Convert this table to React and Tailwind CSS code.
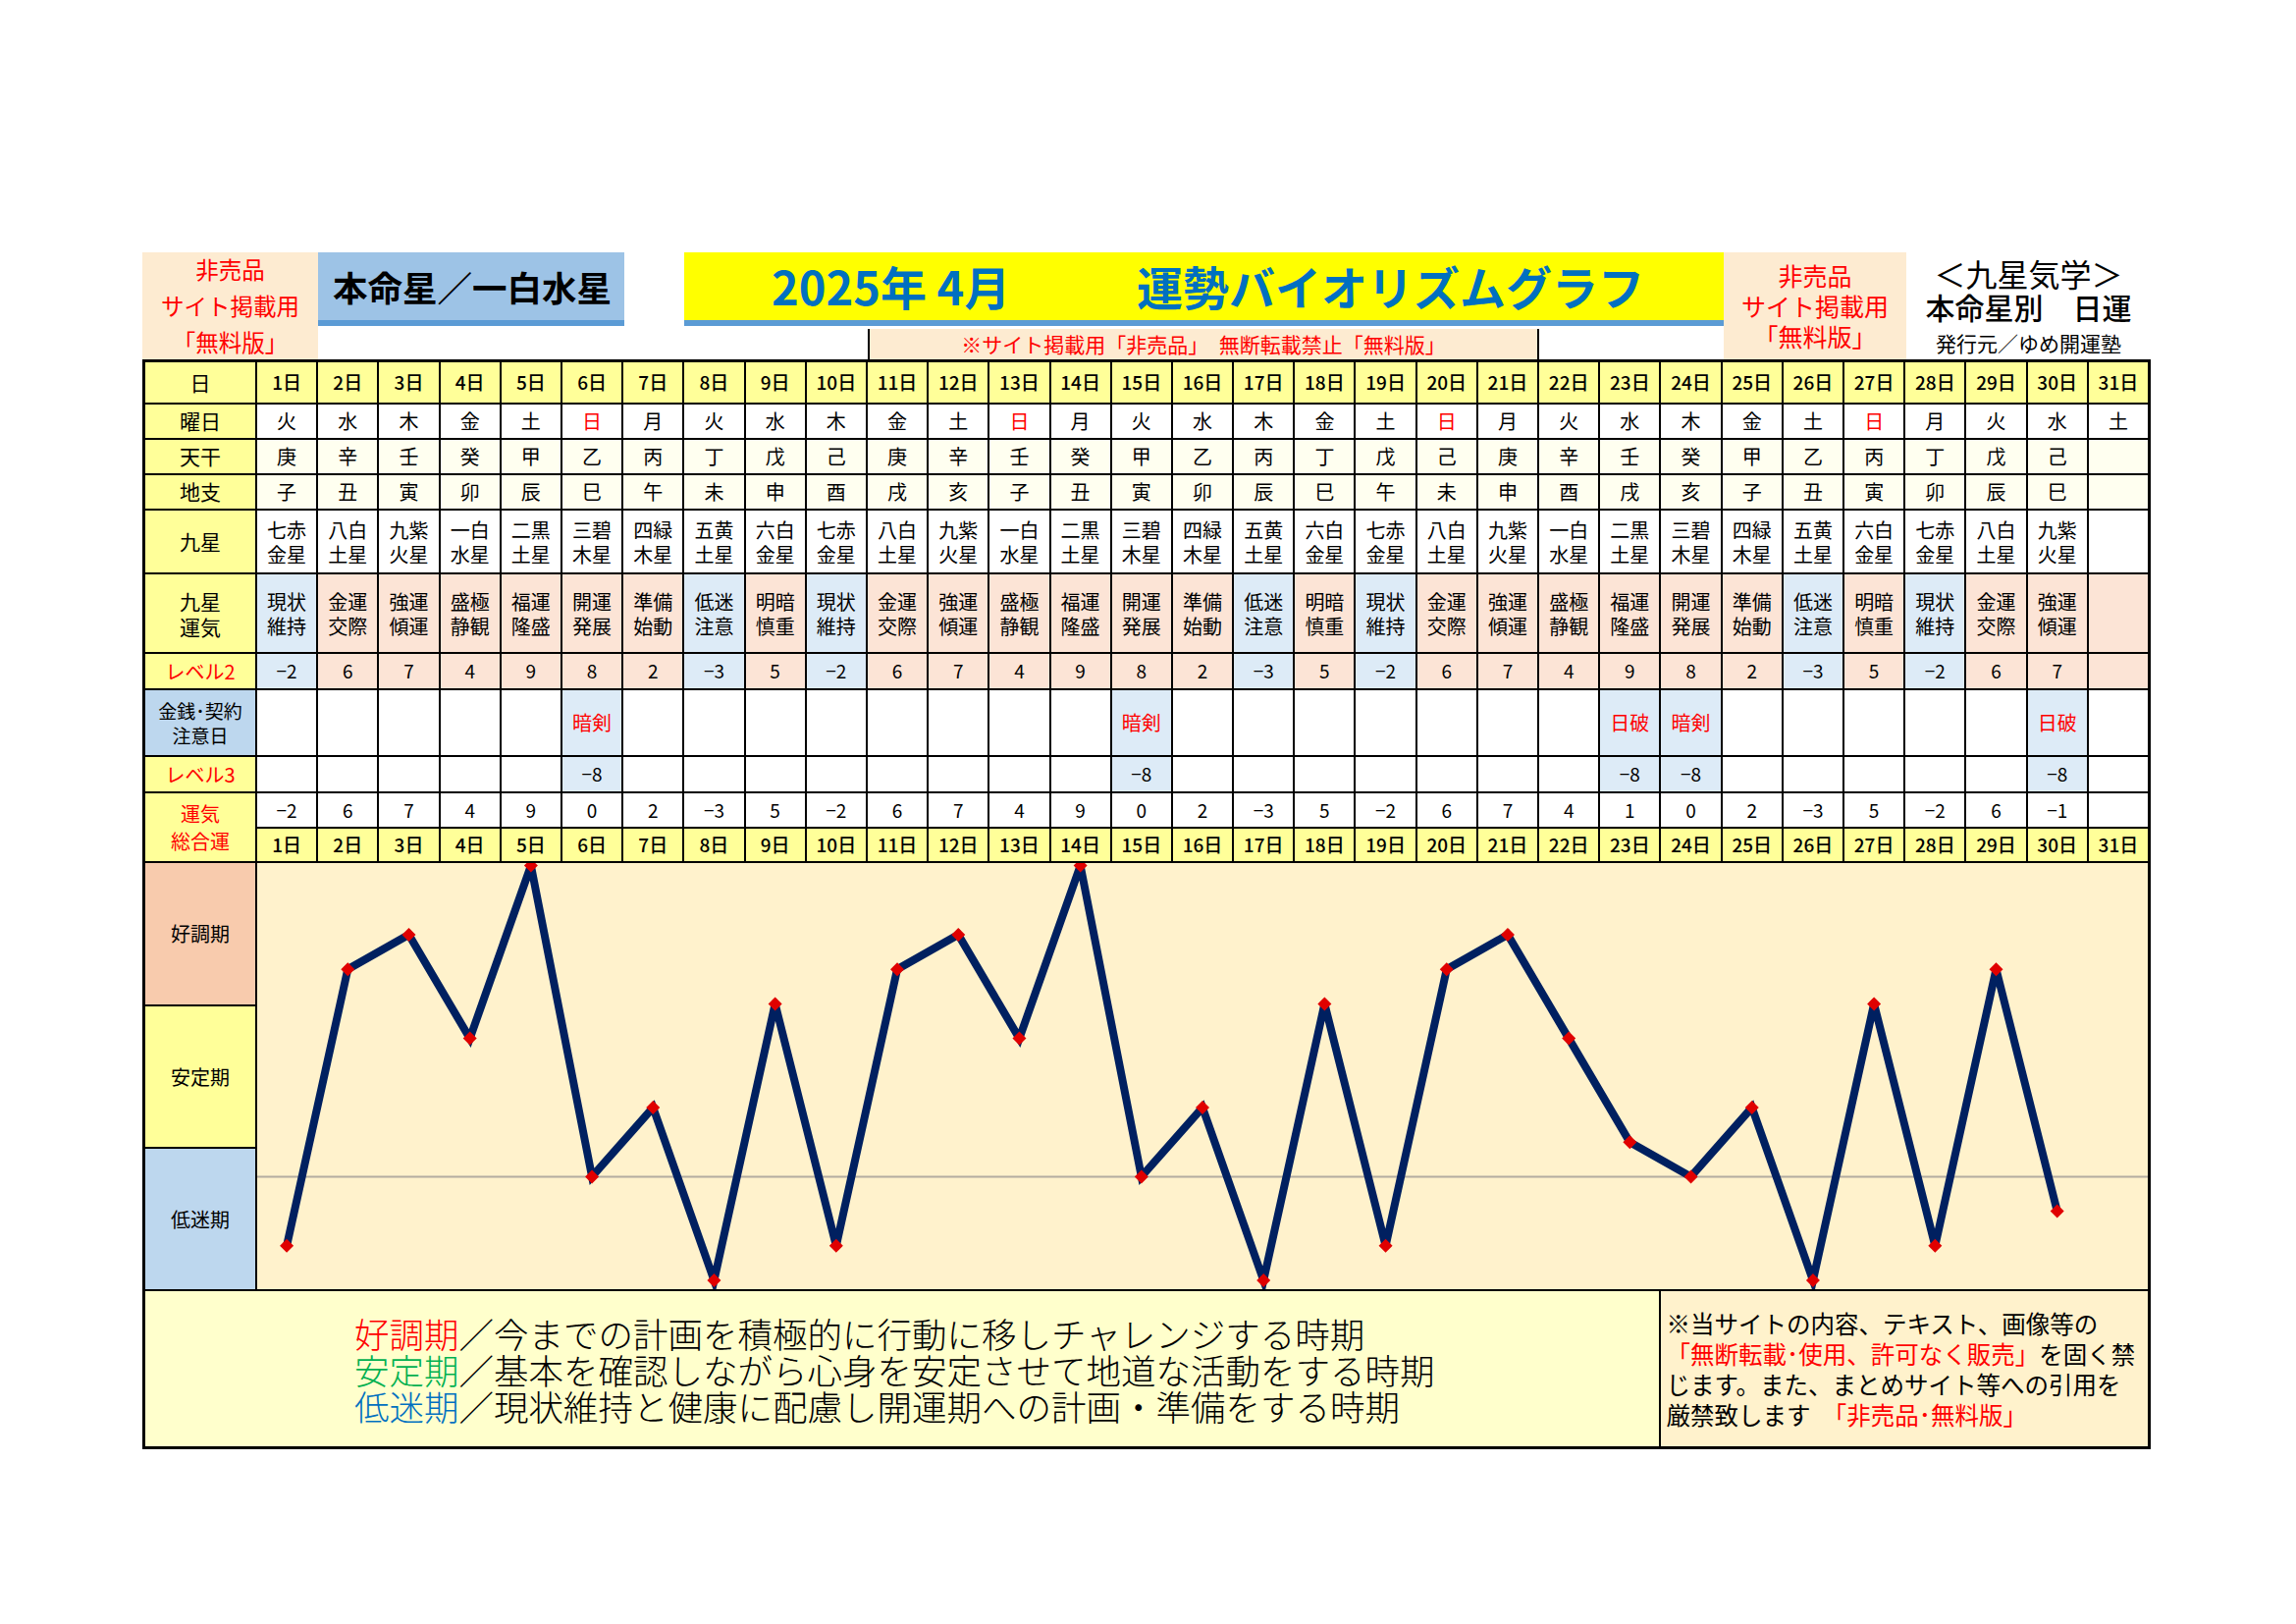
import React from "react";

const STARS = [
  { name: ["七赤", "金星"], unki: ["現状", "維持"], lv: -2 },
  { name: ["八白", "土星"], unki: ["金運", "交際"], lv: 6 },
  { name: ["九紫", "火星"], unki: ["強運", "傾運"], lv: 7 },
  { name: ["一白", "水星"], unki: ["盛極", "静観"], lv: 4 },
  { name: ["二黒", "土星"], unki: ["福運", "隆盛"], lv: 9 },
  { name: ["三碧", "木星"], unki: ["開運", "発展"], lv: 8 },
  { name: ["四緑", "木星"], unki: ["準備", "始動"], lv: 2 },
  { name: ["五黄", "土星"], unki: ["低迷", "注意"], lv: -3 },
  { name: ["六白", "金星"], unki: ["明暗", "慎重"], lv: 5 },
];

const YOUBI = ("火水木金土日月".repeat(4) + "火水土").split("");
const KAN = "庚辛壬癸甲乙丙丁戊己".repeat(3).split("");
const SHI = "子丑寅卯辰巳午未申酉戌亥".repeat(3).slice(0, 30).split("");
const CAUTION = { 6: "暗剣", 15: "暗剣", 23: "日破", 24: "暗剣", 30: "日破" };

const days = Array.from({ length: 31 }, (_, i) => {
  const d = i + 1;
  if (d === 31) return { d, youbi: YOUBI[i], empty: true };
  const star = STARS[i % 9];
  const caution = CAUTION[d];
  return {
    d,
    youbi: YOUBI[i],
    kan: KAN[i],
    shi: SHI[i],
    star,
    low: star.lv < 0,
    caution,
    total: star.lv + (caution ? -8 : 0),
  };
});

const fmt = (n) => (n < 0 ? "−" + Math.abs(n) : String(n));

const LABEL = "bg-[#FFFF99] flex flex-col items-center justify-center text-center";
const CELL = "flex flex-col items-center justify-center text-center";

// chart cell: 31 columns of 60.19px + 30 gaps of 2px, 3 bands + 2 gaps
function Chart() {
  const colW = 1866 / 31;
  const pitch = colW + 2;
  const pts = days
    .filter((x) => !x.empty)
    .map((x) => [(x.d - 1) * pitch + colW / 2, 2.6 + (9 - x.total) * 35.2]);
  const zeroY = 2.6 + 9 * 35.2;
  return (
    <svg className="absolute inset-0 w-full h-full" viewBox="0 0 1926 434" preserveAspectRatio="none">
      <line x1="0" y1={zeroY} x2="1926" y2={zeroY} stroke="#b3aca0" strokeWidth="2" />
      <polyline
        points={pts.map((p) => p.join(",")).join(" ")}
        fill="none"
        stroke="#002060"
        strokeWidth="8"
      />
      {pts.map(([x, y], i) => (
        <polygon
          key={i}
          points={`${x},${y - 7} ${x + 7},${y} ${x},${y + 7} ${x - 7},${y}`}
          fill="#e00000"
        />
      ))}
    </svg>
  );
}

export default function App() {
  return (
    <div className="w-[2339px] h-[1654px] bg-white text-black font-['Noto_Sans_CJK_JP',sans-serif]">
      <div className="ml-[145px] pt-[257px] w-[2046px]">
        {/* banner */}
        <div className="flex h-[109px]">
          <div className="w-[179px] bg-[#FDEBD1] flex flex-col items-center justify-center text-[#FF0000] text-[23.5px] leading-[37px]">
            <span>非売品</span>
            <span>サイト掲載用</span>
            <span>「無料版」</span>
          </div>
          <div className="w-[1432px] flex flex-col">
            <div className="flex h-[75px]">
              <div className="w-[312px] bg-[#9DC3E6] border-b-[6px] border-[#5B9BD5] flex items-center pl-[15px] text-[35.5px] font-bold">
                本命星／一白水星
              </div>
              <div className="w-[61px]" />
              <div className="w-[1059px] bg-[#FFFF00] border-b-[6px] border-[#5B9BD5] flex items-center text-[#0070C0] font-bold text-[47px]">
                <span className="pl-[89px] w-[461px]">2025年 4月</span>
                <span>運勢バイオリズムグラフ</span>
              </div>
            </div>
            <div className="flex h-[34px] pt-[3px]">
              <div className="w-[560px]" />
              <div className="w-[684px] bg-[#FDEBD1] border-x-2 border-black flex items-center justify-center text-[#FF0000] text-[21px]">
                ※サイト掲載用「非売品」　無断転載禁止「無料版」
              </div>
            </div>
          </div>
          <div className="w-[186px] bg-[#FDEBD1] flex flex-col items-center justify-center text-[#FF0000] text-[25px] leading-[31px]">
            <span>非売品</span>
            <span>サイト掲載用</span>
            <span>「無料版」</span>
          </div>
          <div className="w-[249px] flex flex-col items-center justify-center">
            <span className="text-[32px] leading-[34px]">＜九星気学＞</span>
            <span className="text-[30px] leading-[34px] font-medium">本命星別　日運</span>
            <span className="text-[21px] leading-[28px] mt-[6px]">発行元／ゆめ開運塾</span>
          </div>
        </div>

        {/* table */}
        <div className="grid w-[2046px] bg-black p-[3px] gap-[2px] grid-cols-[112px_repeat(31,minmax(0,1fr))] grid-rows-[41px_34px_34px_34px_63px_79px_35px_66px_35px_34px_33px_144px_143px_143px_158px] text-[20px]">
          <div className={`${LABEL} text-[21px]`}>日</div>
          {days.map((x) => (
            <div key={"h" + x.d} className={`${CELL} bg-[#FFFF99] text-[19px] font-medium`}>{x.d}日</div>
          ))}

          <div className={`${LABEL} text-[21px]`}>曜日</div>
          {days.map((x) => (
            <div key={"y" + x.d} className={`${CELL} bg-white ${x.youbi === "日" ? "text-[#FF0000]" : ""}`}>{x.youbi}</div>
          ))}

          <div className={`${LABEL} text-[21px]`}>天干</div>
          {days.map((x) => (
            <div key={"k" + x.d} className={`${CELL} bg-[#FFFFF0]`}>{x.kan}</div>
          ))}

          <div className={`${LABEL} text-[21px]`}>地支</div>
          {days.map((x) => (
            <div key={"s" + x.d} className={`${CELL} bg-[#FFFFF0]`}>{x.shi}</div>
          ))}

          <div className={`${LABEL} text-[21px]`}>九星</div>
          {days.map((x) => (
            <div key={"n" + x.d} className={`${CELL} bg-white leading-[25px]`}>
              {x.star && (
                <>
                  <span>{x.star.name[0]}</span>
                  <span>{x.star.name[1]}</span>
                </>
              )}
            </div>
          ))}

          <div className={`${LABEL} text-[21px] leading-[26px]`}>
            <span>九星</span>
            <span>運気</span>
          </div>
          {days.map((x) => (
            <div key={"u" + x.d} className={`${CELL} leading-[25px] ${x.low ? "bg-[#DDEBF7]" : "bg-[#FCE4D6]"}`}>
              {x.star && (
                <>
                  <span>{x.star.unki[0]}</span>
                  <span>{x.star.unki[1]}</span>
                </>
              )}
            </div>
          ))}

          <div className={`${LABEL} text-[#FF0000]`}>レベル2</div>
          {days.map((x) => (
            <div key={"l2" + x.d} className={`${CELL} text-[19px] ${x.low ? "bg-[#DDEBF7]" : "bg-[#FCE4D6]"}`}>
              {x.star ? fmt(x.star.lv) : ""}
            </div>
          ))}

          <div className={`${LABEL} !bg-[#BDD7EE] text-[19px] leading-[25px]`}>
            <span>金銭･契約</span>
            <span>注意日</span>
          </div>
          {days.map((x) => (
            <div key={"c" + x.d} className={`${CELL} text-[#FF0000] ${x.caution ? "bg-[#DDEBF7]" : "bg-white"}`}>
              {x.caution || ""}
            </div>
          ))}

          <div className={`${LABEL} text-[#FF0000]`}>レベル3</div>
          {days.map((x) => (
            <div key={"l3" + x.d} className={`${CELL} text-[19px] ${x.caution ? "bg-[#DDEBF7]" : "bg-white"}`}>
              {x.caution ? fmt(-8) : ""}
            </div>
          ))}

          <div className={`${LABEL} row-span-2 text-[#FF0000] leading-[28px]`}>
            <span>運気</span>
            <span>総合運</span>
          </div>
          {days.map((x) => (
            <div key={"t" + x.d} className={`${CELL} bg-white text-[19px]`}>
              {x.empty ? "" : fmt(x.total)}
            </div>
          ))}
          {days.map((x) => (
            <div key={"f" + x.d} className={`${CELL} bg-[#FFFF99] text-[19px] font-medium`}>{x.d}日</div>
          ))}

          <div className={`${CELL} bg-[#F8CBAD]`}>好調期</div>
          <div className="col-span-31 row-span-3 bg-[#FFF2CC] relative">
            <Chart />
          </div>
          <div className={`${CELL} bg-[#FFFF99]`}>安定期</div>
          <div className={`${CELL} bg-[#BDD7EE]`}>低迷期</div>

          <div className="col-span-24 bg-[#FFFFCC] flex flex-col justify-center pl-[213px] text-[35.5px] leading-[37px] font-light">
            <p>
              <span className="text-[#FF0000]">好調期</span>／今までの計画を積極的に行動に移しチャレンジする時期
            </p>
            <p>
              <span className="text-[#00B050]">安定期</span>／基本を確認しながら心身を安定させて地道な活動をする時期
            </p>
            <p>
              <span className="text-[#0070C0]">低迷期</span>／現状維持と健康に配慮し開運期への計画・準備をする時期
            </p>
          </div>
          <div className="col-span-8 bg-[#FFF2CC] flex flex-col justify-center pl-[5px] text-[24.5px] leading-[31px] whitespace-nowrap">
            <p>※当サイトの内容、テキスト、画像等の</p>
            <p>
              <span className="text-[#FF0000]">「無断転載･使用、許可なく販売」</span>を固く禁
            </p>
            <p>じます。また、まとめサイト等への引用を</p>
            <p>
              厳禁致します<span className="text-[#FF0000]">　「非売品･無料版」</span>
            </p>
          </div>
        </div>
      </div>
    </div>
  );
}
